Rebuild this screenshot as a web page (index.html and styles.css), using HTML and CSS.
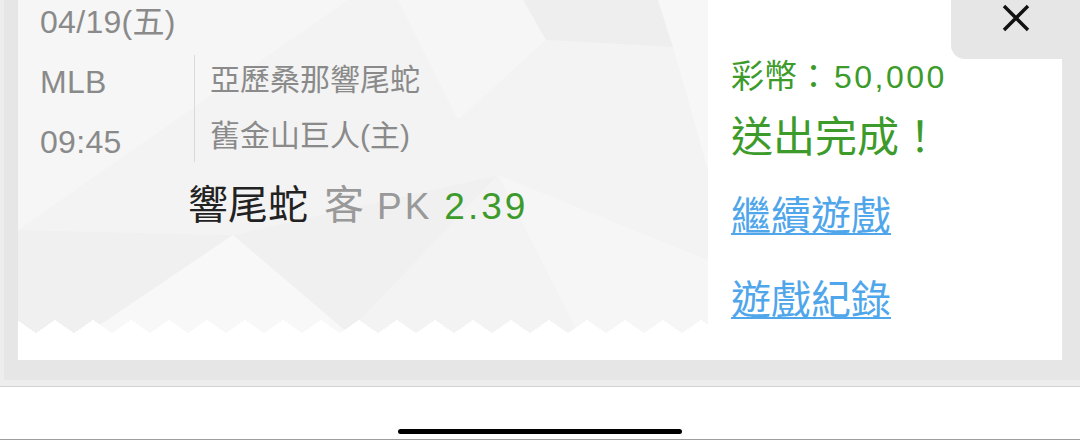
FILE: index.html
```html
<!DOCTYPE html>
<html lang="zh-Hant">
<head>
    <meta charset="UTF-8">
    <meta name="viewport" content="width=device-width, initial-scale=1.0">
    <title>投注完成</title>
    <link rel="stylesheet" href="styles.css">
</head>
<body>
    <div class="screen">
        <div class="frame">
            <div class="ticket">
                <section class="bet">
                    <svg class="bet-bg" viewBox="0 0 690 333" preserveAspectRatio="none" aria-hidden="true">
                        <polygon points="0,0 330,0 0,230" fill="#fff" fill-opacity="0.3"/>
                        <polygon points="505,0 640,0 655,47 528,40" fill="#000" fill-opacity="0.02"/>
                        <polygon points="380,0 505,0 528,40 440,120" fill="#fff" fill-opacity="0.25"/>
                        <polygon points="640,0 690,0 690,170 655,47" fill="#fff" fill-opacity="0.35"/>
                        <polygon points="70,333 215,235 330,333" fill="#fff" fill-opacity="0.4"/>
                        <polygon points="215,235 480,175 330,333" fill="#000" fill-opacity="0.012"/>
                        <polygon points="480,175 690,260 690,333 560,333" fill="#fff" fill-opacity="0.25"/>
                        <polygon points="0,230 215,235 70,333 0,333" fill="#000" fill-opacity="0.01"/>
                    </svg>
                    <div class="date">04/19(五)</div>
                    <div class="match">
                        <div class="meta">
                            <div>MLB</div>
                            <div>09:45</div>
                        </div>
                        <div class="teams">
                            <div>亞歷桑那響尾蛇</div>
                            <div>舊金山巨人(主)</div>
                        </div>
                    </div>
                    <div class="pick">
                        <span class="pick-team">響尾蛇</span>
                        <span class="pick-side">客</span>
                        <span class="pick-type">PK</span>
                        <span class="pick-odds">2.39</span>
                    </div>
                </section>
                <section class="result">
                    <div class="coins">彩幣：<span class="coins-num">50,000</span></div>
                    <div class="done">送出完成！</div>
                    <a class="link link-continue" href="#">繼續遊戲</a>
                    <a class="link link-history" href="#">遊戲紀錄</a>
                </section>
            </div>
        </div>
        <button class="close" aria-label="關閉">
            <svg width="28" height="28" viewBox="0 0 28 28">
                <path d="M2 2 L26 26 M26 2 L2 26" stroke="#111" stroke-width="3.4" fill="none"/>
            </svg>
        </button>
        <div class="home-area">
            <div class="home-indicator"></div>
        </div>
    </div>
</body>
</html>
```

FILE: styles.css
```css
html, body {
    margin: 0;
    height: 100%;
    overflow: hidden;
}

body {
    font-family: "Liberation Sans", "Noto Sans CJK TC", sans-serif;
    background-color: #fff;
    color: #222;
}

.screen {
    position: relative;
    height: 441px;
}

.frame {
    background-color: #e6e6e6;
    border-left: 4px solid #ededed;
    padding: 0 18px 20px 14px;
    border-bottom: 6px solid #ededed;
    box-shadow: 0 1px 0 #d2d2d2;
}

.ticket {
    display: flex;
    align-items: flex-start;
    height: 360px;
    background-color: #fff;
}

/* left part of the ticket: bet details */
.bet {
    position: relative;
    width: 690px;
    height: 333px;
    box-sizing: border-box;
    padding-left: 22px;
    background-color: #f3f3f3;
    color: #8a8a8a;
}

.bet-bg {
    position: absolute;
    left: 0;
    top: 0;
    width: 100%;
    height: 100%;
}

.bet::after {
    content: "";
    position: absolute;
    left: 0;
    right: 0;
    bottom: 0;
    height: 13px;
    background: conic-gradient(from 124.4deg at 50% 0, #fff 0 111.2deg, transparent 0) 18px 0 / 38px 13px repeat-x;
}

.date, .match, .pick {
    position: relative;
}

.date {
    margin-top: 4px;
    font-size: 32px;
    line-height: 36px;
    letter-spacing: 0.3px;
}

.match {
    display: flex;
    margin-top: 15px;
    height: 107px;
}

.meta {
    width: 154px;
    padding-top: 9px;
    font-size: 32px;
    line-height: 36px;
    letter-spacing: 0.3px;
}

.meta div + div {
    margin-top: 24px;
}

.teams {
    border-left: 1px solid #dadada;
    padding-left: 15px;
    padding-top: 7px;
    font-size: 30px;
    line-height: 36px;
}

.teams div + div {
    margin-top: 20px;
}

.pick {
    display: flex;
    align-items: baseline;
    margin-top: 20px;
    padding-left: 148px;
    line-height: 46px;
}

.pick-team {
    font-size: 40px;
    color: #222;
}

.pick-side {
    font-size: 40px;
    margin-left: 16px;
    color: #999;
}

.pick-type {
    font-size: 37px;
    margin-left: 13px;
    letter-spacing: 3px;
    color: #999;
}

.pick-odds {
    font-size: 37px;
    margin-left: 12px;
    letter-spacing: 3px;
    color: #3c9b2a;
}

/* right part: result and links */
.result {
    flex: 1;
    padding-left: 23px;
    color: #3c9b2a;
}

.coins {
    margin-top: 55px;
    font-size: 33px;
    line-height: 44px;
}

.coins-num {
    margin-left: 4px;
    font-size: 32px;
    letter-spacing: 2.5px;
}

.done {
    margin-top: 14px;
    font-size: 42px;
    line-height: 50px;
}

.link {
    display: block;
    width: fit-content;
    font-size: 40px;
    line-height: 50px;
    color: #4fa6ea;
    text-decoration: underline;
    text-decoration-thickness: 2px;
    text-underline-offset: 3px;
}

.link-continue {
    margin-top: 28px;
}

.link-history {
    margin-top: 34px;
}

.close {
    position: absolute;
    top: 0;
    right: 0;
    width: 129px;
    height: 59px;
    display: flex;
    justify-content: center;
    align-items: flex-start;
    padding: 4px 0 0;
    border: none;
    border-bottom-left-radius: 14px;
    background-color: #e6e6e6;
    cursor: pointer;
}

.home-area {
    height: 53px;
    margin-top: 1px;
    border-bottom: 1px solid #9e9e9e;
    box-sizing: border-box;
    padding-top: 42px;
}

.home-indicator {
    width: 284px;
    height: 5px;
    margin: 0 auto;
    border-radius: 3px;
    background-color: #000;
}
```
